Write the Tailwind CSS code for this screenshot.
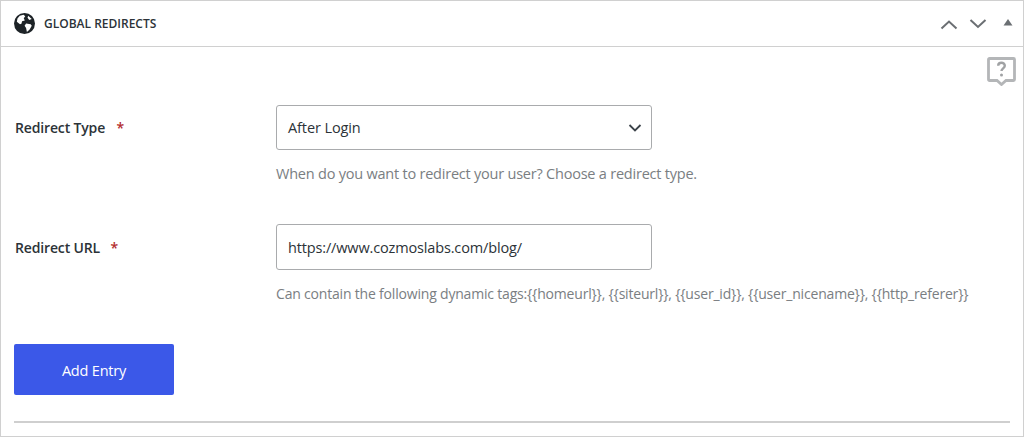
<!DOCTYPE html>
<html lang="en">
<head>
    <meta charset="UTF-8">
    <title>Global Redirects</title>
    <script src="https://cdn.jsdelivr.net/npm/@tailwindcss/browser@4"></script>
</head>
<body class="bg-white font-['Open_Sans',sans-serif] text-[#2c3338] h-[437px] overflow-hidden">
    <div class="relative h-[437px] border border-[#d0d0d0]">
        <!-- Header -->
        <header class="flex h-[46px] items-center justify-between border-b border-[#d0d0d0] pl-[13px] pr-[9px]">
            <div class="flex items-center gap-[9px]">
                <svg class="w-[21px] h-[21px]" viewBox="0 0 20 20"><circle cx="10" cy="10" r="10" fill="#1d2327"/><path fill="#fff" d="M5.5 2.6l3.6-1 1.6 1.6-1.4 1.8 1 2.2-2.6.6-.6 2.4-1.4.6-3-2.4.6-3.2zM11.5 10l4.4.6 1 1.6-2 3.6-2.6 2.2-.8-3.6-1.4-2.2zM13.5 2.6l3.4 3-2.4 1-1.6-2z"/></svg>
                <span class="text-[12px] font-semibold">GLOBAL REDIRECTS</span>
            </div>
            <div class="flex items-center text-[#6b6f73]">
                <svg class="w-[18px] h-[18px] mr-[11px]" viewBox="0 0 18 18" fill="none" stroke="currentColor" stroke-width="2"><path d="M1.5 13.5L9 6.5l7.5 7"/></svg>
                <svg class="w-[18px] h-[18px] mr-[15px]" viewBox="0 0 18 18" fill="none" stroke="currentColor" stroke-width="2"><path d="M1.5 5l7.5 7 7.5-7"/></svg>
                <svg class="w-[12px] h-[12px]" viewBox="0 0 12 12" fill="currentColor"><path d="M6 1l4.5 6.5h-9z"/></svg>
            </div>
        </header>

        <!-- Help bubble -->
        <svg class="absolute right-[7px] top-[56px] w-[29px] h-[29px] text-[#b4b6b8]" viewBox="0 0 29 29" fill="none" stroke="currentColor" stroke-width="2.8"><path d="M2.5 1.5h24a1 1 0 0 1 1 1v20a1 1 0 0 1-1 1h-7.5l-4.5 4-4.5-4H2.5a1 1 0 0 1-1-1v-20a1 1 0 0 1 1-1z"/><path d="M11.2 8.8c0-4 6.6-4 6.6 0 0 2.6-3.3 2.6-3.3 5.2" stroke="#a0a2a4" stroke-width="2.4"/><circle cx="14.5" cy="18" r="1.5" fill="#a0a2a4" stroke="none"/></svg>

        <!-- Form -->
        <main class="pl-[13px] pr-[13px]">
            <div class="flex pt-[58px]">
                <label class="w-[262px] pl-[1px] pt-[12px] text-[14px] font-semibold tracking-[-0.15px]">Redirect Type <span class="text-[#b32d2e] ml-[8px]">*</span></label>
                <div>
                    <div class="flex items-center justify-between w-[376px] h-[45px] pl-[11px] pr-[9px] border border-[#a9abad] rounded-[3px] text-[14.5px] tracking-[-0.1px]">
                        After Login
                        <svg class="w-[14px] h-[14px]" viewBox="0 0 14 14" fill="none" stroke="#3c434a" stroke-width="1.8"><path d="M1.5 4l5.5 5.5L12.5 4"/></svg>
                    </div>
                    <p class="mt-[14px] text-[14.5px] leading-[20px] text-[#7a7e82] tracking-[-0.22px]">When do you want to redirect your user? Choose a redirect type.</p>
                </div>
            </div>
            <div class="flex pt-[40px]">
                <label class="w-[262px] pl-[1px] pt-[13px] text-[14px] font-semibold tracking-[-0.15px]">Redirect URL <span class="text-[#b32d2e] ml-[7px]">*</span></label>
                <div>
                    <div class="flex items-center w-[376px] h-[46px] pl-[11px] pr-[12px] pt-[1px] border border-[#a9abad] rounded-[3px] text-[14.5px] tracking-[-0.15px]">https://www.cozmoslabs.com/blog/</div>
                    <p class="mt-[14px] text-[14px] leading-[20px] text-[#7a7e82] tracking-[-0.19px] whitespace-nowrap">Can contain the following dynamic tags:{{homeurl}}, {{siteurl}}, {{user_id}}, {{user_nicename}}, {{http_referer}}</p>
                </div>
            </div>
            <button class="block mt-[40px] w-[160px] h-[51px] bg-[#3b58e8] rounded-[2px] text-white text-[14.5px] tracking-[-0.2px] pt-[2px]">Add Entry</button>
            <div class="mt-[26px] border-t-2 border-[#cfcfcf]"></div>
        </main>
    </div>
</body>
</html>
